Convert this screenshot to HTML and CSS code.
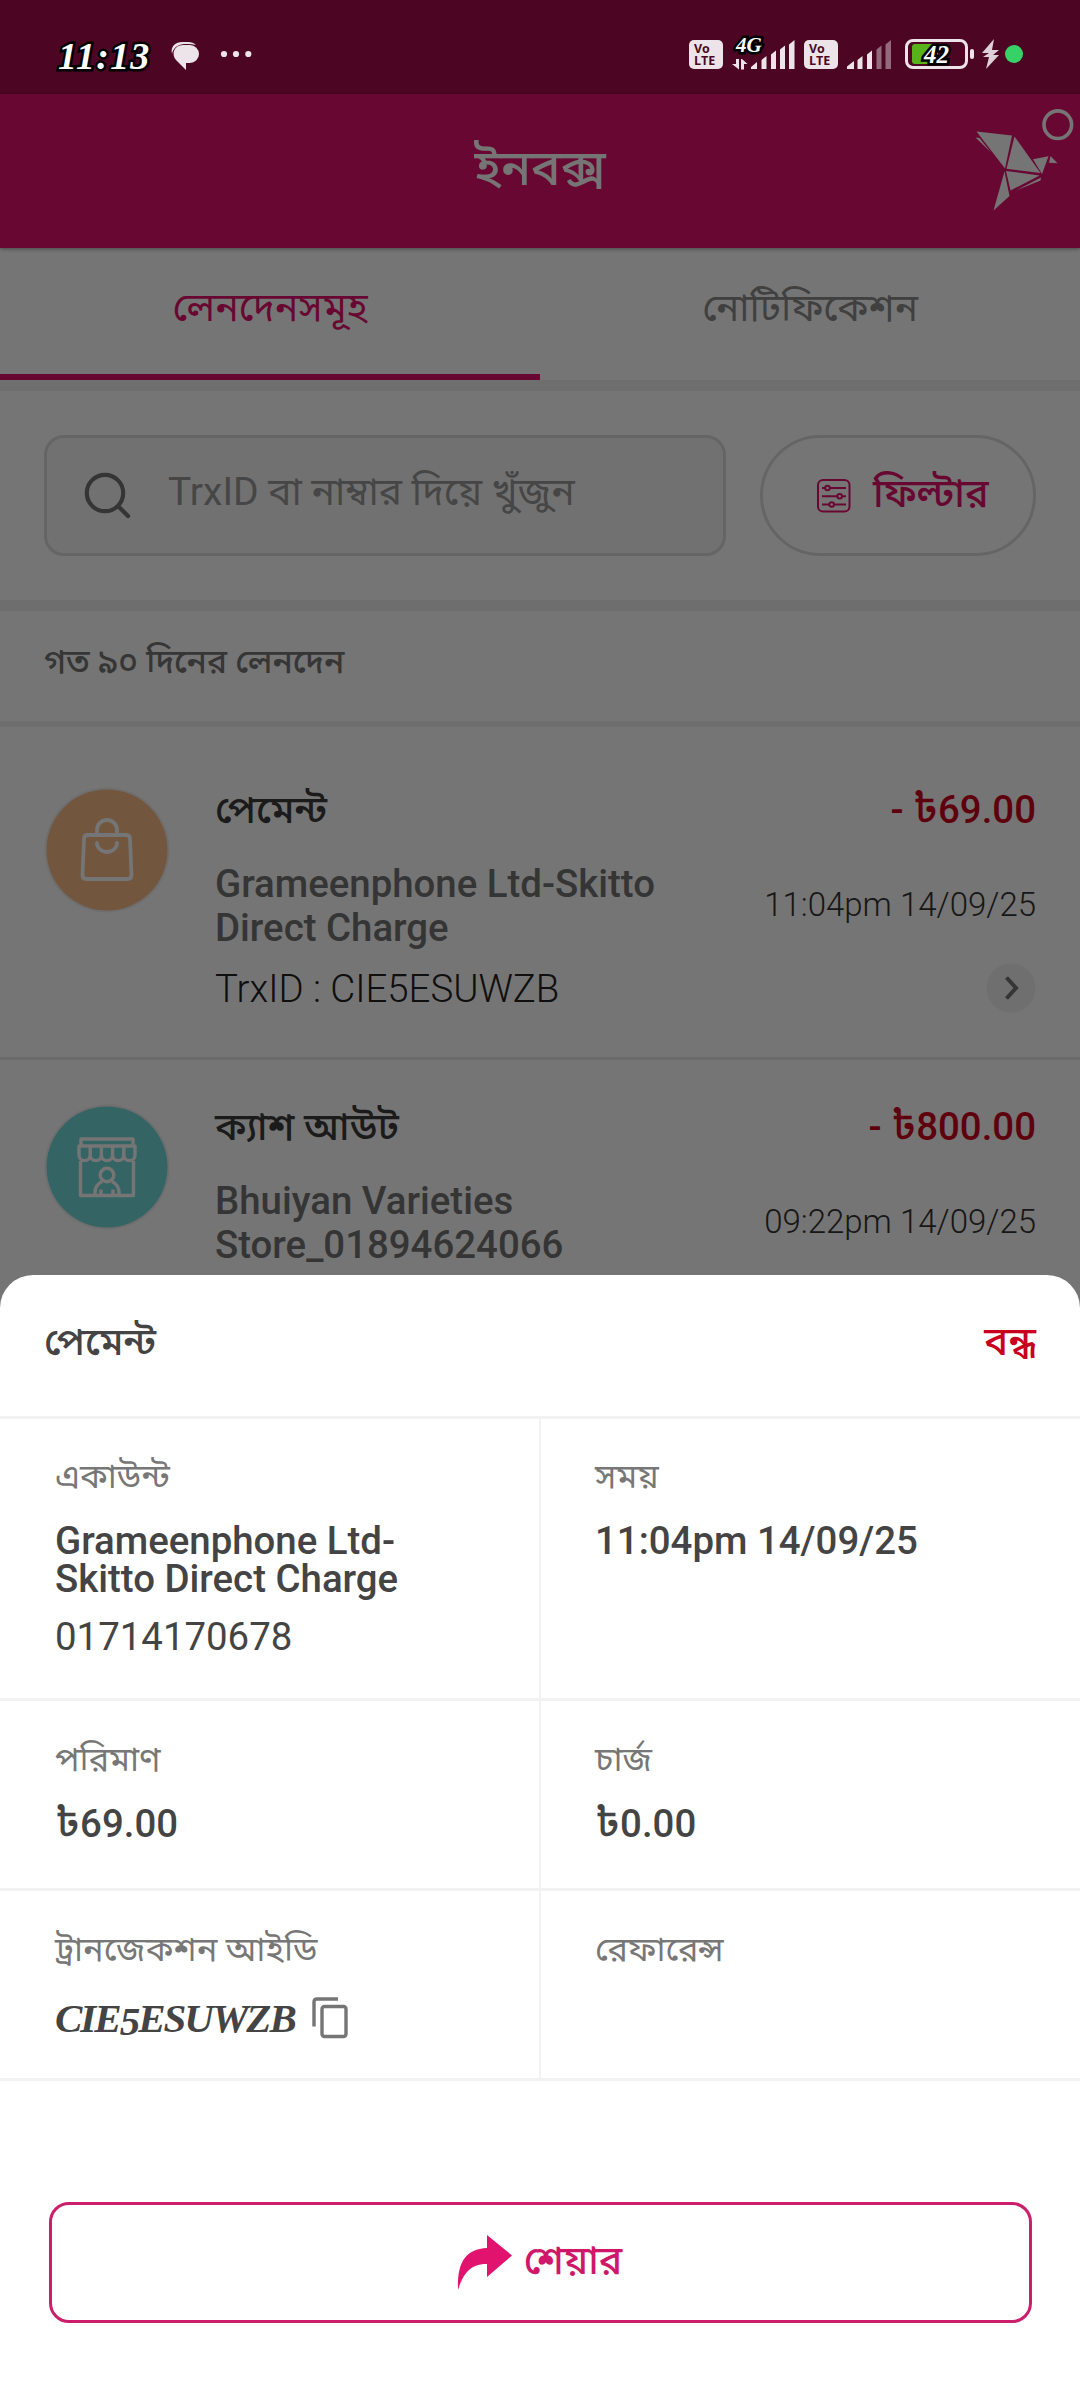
FILE: index.html
```html
<!DOCTYPE html>
<html lang="bn">
<head>
<meta charset="utf-8">
<title>ইনবক্স</title>
<link rel="stylesheet" href="styles.css">
</head>
<body>
<div class="phone">
  <main class="app">
    <div class="status-bg"></div>
    <header class="appbar">
      <h1 class="appbar-title">ইনবক্স</h1>
      <svg class="bird" width="120" height="120" viewBox="0 0 120 120">
        <g fill="#fff">
          <path d="M16.500 31.500 52 35.500 45 68.500Z"/>
          <path d="M54.500 36.500 80.500 73 46.500 68.800Z"/>
          <path d="M15.500 37.500 19.500 38 31 52.500Z"/>
          <path d="M46 71 79.500 75.500 50.500 90.500Z"/>
          <path d="M44.500 71.500 49.500 96 33.500 110.500Z"/>
          <path d="M73 59.300 88.500 56.300 82 74Z"/>
          <path d="M90.500 56 97.500 63.300 89 62.800Z"/>
          <path d="M56 90.500 81 77.500 80.500 80.500Z"/>
        </g>
        <circle cx="97.800" cy="24.700" r="13.800" fill="none" stroke="#fff" stroke-width="3.600"/>
      </svg>
    </header>
    <nav class="tabs">
      <div class="tab tab-active">লেনদেনসমূহ</div>
      <div class="tab">নোটিফিকেশন</div>
    </nav>
    <section class="search-row">
      <div class="search">
        <svg width="50" height="50" viewBox="0 0 50 50" fill="none" stroke="#747474" stroke-width="4.200" stroke-linecap="round"><circle cx="22" cy="22" r="18.200"/><path d="M35.500 35.500 45 45"/></svg>
        <span>TrxID বা নাম্বার দিয়ে খুঁজুন</span>
      </div>
      <div class="filter">
        <svg width="34" height="34" viewBox="0 0 34 34" fill="none" stroke="#e2136e" stroke-width="2"><rect x="1" y="1" width="31.500" height="31.500" rx="5"/><path d="M5 9h3M13 9h16M5 17.300h15M25.500 17.300h3.500M5 25.500h7M17.500 25.500h11.500"/><circle cx="10.500" cy="9" r="2.300"/><circle cx="22.700" cy="17.300" r="2.300"/><circle cx="14.700" cy="25.500" r="2.300"/></svg>
        <span>ফিল্টার</span>
      </div>
    </section>
    <h2 class="list-title">গত ৯০ দিনের লেনদেন</h2>
    <article class="txn">
      <svg class="txn-icon" width="126" height="126" viewBox="0 0 126 126">
        <circle cx="63" cy="63" r="62.500" fill="#f0f0f0"/><circle cx="63" cy="63" r="60.500" fill="#f8bb87"/>
        <g fill="none" stroke="#fff" stroke-width="3.800" stroke-linecap="round"><path d="M44 48h38q4 0 4 4l1.500 36q0 4-4 4H42.500q-4 0-4-4L40 52q0-4 4-4ZM53 46v-3a10 10 0 0 1 20 0v3M53 56a10 9 0 0 0 20 0"/></g>
      </svg>
      <div class="txn-main">
        <h3>পেমেন্ট</h3>
        <p class="txn-name">Grameenphone Ltd-Skitto Direct Charge</p>
        <p class="txn-id">TrxID : CIE5ESUWZB</p>
      </div>
      <div class="txn-side">
        <p class="txn-amount">- <span class="taka">৳</span>69.00</p>
        <p class="txn-time">11:04pm 14/09/25</p>
        <svg width="50" height="50" viewBox="0 0 50 50"><circle cx="25" cy="25" r="24.500" fill="#f2f2f2"/><path d="M20.500 14.500 30 25l-9.500 10.500" fill="none" stroke="#747474" stroke-width="4"/></svg>
      </div>
    </article>
    <article class="txn txn-next">
      <svg class="txn-icon" width="126" height="126" viewBox="0 0 126 126">
        <circle cx="63" cy="63" r="62.500" fill="#f0f0f0"/><circle cx="63" cy="63" r="60.500" fill="#75d9d9"/>
        <g fill="none" stroke="#fff" stroke-width="3.400" stroke-linejoin="round"><path d="M37 35h52v7H37ZM35 42h56v9a5.600 5.600 0 0 1-11.200 0 5.600 5.600 0 0 1-11.200 0 5.600 5.600 0 0 1-11.200 0 5.600 5.600 0 0 1-11.200 0 5.600 5.600 0 0 1-11.200 0ZM46.200 42v9M57.400 42v9M68.600 42v9M79.800 42v9M36.500 57v34.500h53V57M51 91.500v-3c0-7 5-10 7-11M75 91.500v-3c0-7-5-10-7-11M57 85.500v6M69 85.500v6"/><circle cx="63" cy="71" r="6.800"/></g>
      </svg>
      <div class="txn-main">
        <h3>ক্যাশ আউট</h3>
        <p class="txn-name">Bhuiyan Varieties Store_01894624066</p>
      </div>
      <div class="txn-side">
        <p class="txn-amount">- <span class="taka">৳</span>800.00</p>
        <p class="txn-time">09:22pm 14/09/25</p>
      </div>
    </article>
  </main>
  <div class="scrim"></div>

  <div class="status">
    <span class="clock outlined">11:13</span>
    <svg class="status-chat" width="30" height="30" viewBox="0 0 30 30"><path d="M1 13C-1 5 5 1 11 1h6q5 0 8 3-4-1-8-1h-4C5 4 2 8 1 13Z" fill="#ece4e8"/><path d="M12 4h7a9 9 0 0 1 0 18h-4v7L5 19C0 13 3 4 12 4Z" fill="#ece4e8"/></svg>
    <svg class="status-dots" width="34" height="8" viewBox="0 0 34 8" fill="#ece4e8"><circle cx="4" cy="4" r="3.100"/><circle cx="16" cy="4" r="3.100"/><circle cx="28.300" cy="4" r="3.100"/></svg>
    <div class="volte"><span>Vo</span><span>LTE</span></div>
    <div class="net">
      <span class="net-type outlined">4G</span>
      <svg width="64" height="30" viewBox="0 0 64 30" fill="#ece4e8"><path d="M4 19h3v10.500L0 24h4ZM10 19l5.500 5H12v5.500H9V19ZM19 29v-2l6-5v7ZM29.500 29V20l5-4v13ZM39 29V14.500l5-4V29ZM48 29V9.500l5-4V29ZM57 29V4.500L62.500 0v29Z"/></svg>
    </div>
    <div class="volte volte-2"><span>Vo</span><span>LTE</span></div>
    <svg class="signal" width="46" height="30" viewBox="0 0 46 30" fill="#ece4e8"><path d="M0 29v-2.500l7-5.500v8ZM10.500 29V20l5-4v13ZM20 29V14.500l5-4V29Z"/><path opacity=".45" d="M29.500 29V9.500l5-4V29ZM38.500 29V4.500L44 0v29Z"/></svg>
    <div class="battery"><i></i><span class="outlined">42</span></div>
    <svg class="bolt" width="28" height="32" viewBox="0 0 28 32"><path d="M13 1 1 15h7L2 19h6l-3 12L18 17h-6l6-5h-7Z" fill="#ded0d7"/></svg>
    <i class="live-dot"></i>
  </div>

  <section class="sheet">
    <header class="sheet-head"><h2>পেমেন্ট</h2><span class="close">বন্ধ</span></header>
    <div class="details">
      <div class="cell cell-tall"><p class="label">একাউন্ট</p><p class="value">Grameenphone Ltd-<br>Skitto Direct Charge</p><p class="number">01714170678</p></div>
      <div class="cell cell-tall"><p class="label">সময়</p><p class="value">11:04pm 14/09/25</p></div>
      <div class="cell"><p class="label">পরিমাণ</p><p class="value"><span class="taka">৳</span>69.00</p></div>
      <div class="cell"><p class="label">চার্জ</p><p class="value"><span class="taka">৳</span>0.00</p></div>
      <div class="cell"><p class="label">ট্রানজেকশন আইডি</p>
        <div class="trx"><span>CIE</span><span class="old">5</span><span>ESUWZB</span>
          <svg width="36" height="42" viewBox="0 0 36 42" fill="none" stroke="#757575" stroke-width="3.400"><path d="M2 29.500V5q0-3 3-3h21"/><rect x="10" y="9.500" width="24" height="30" rx="2.500"/></svg>
        </div>
      </div>
      <div class="cell"><p class="label">রেফারেন্স</p></div>
    </div>
    <div class="share">
      <svg width="54" height="55" viewBox="0 0 54 55"><path d="M29 0 54 20.500 29 42V29C14 29 6 36 0 55 -1 28 7 14 29 13Z" fill="#e2136e"/></svg>
      <span>শেয়ার</span>
    </div>
  </section>
</div>
</body>
</html>
```
FILE: styles.css
```css
* { box-sizing: border-box; margin: 0; padding: 0; }
body { width: 1080px; height: 2400px; overflow: hidden; background: #fff; }
svg { display: block; flex: none; overflow: visible; }
h1, h2, h3 { font-weight: 500; }
.phone {
  position: relative; width: 1080px; height: 2400px; overflow: hidden;
  font-family: Roboto, "Noto Sans Bengali", "Noto Sans", sans-serif;
  font-size: 38.4px; line-height: 40px; color: #444;
}
.scrim { position: absolute; inset: 0; background: rgba(0, 0, 0, .54); }
.taka { font-size: 42px; line-height: 0; }

.status-bg { height: 94px; background: #a70f4c; }
.appbar {
  position: relative; height: 154px; background: #e2136e; color: #fff;
  display: flex; justify-content: center; padding-top: 54px;
  box-shadow: 0 1px 4px rgba(0, 0, 0, .4);
}
.appbar-title { font-size: 49.4px; line-height: 40px; }
.bird { position: absolute; right: 0; top: 6px; }

.tabs { display: flex; height: 143px; border-bottom: 11px solid #efefef; color: #8c8c8c; }
.tab { flex: 1; text-align: center; padding-top: 40px; font-size: 38.6px; }
.tab-active { color: #e2136e; border-bottom: 6px solid #e2136e; font-size: 39.2px; }

.search-row { display: flex; gap: 34px; height: 220px; padding: 44px 44px 0; border-bottom: 11px solid #efefef; }
.search {
  width: 682px; height: 121px; border: 3px solid #dcdcdc; border-radius: 20px; background: #f6f6f6;
  display: flex; align-items: center; gap: 35px; padding-left: 36px; color: #999; font-size: 39px;
}
.search span { padding-bottom: 8px; white-space: nowrap; }
.filter {
  width: 276px; height: 121px; border: 3px solid #dcdcdc; border-radius: 61px; color: #e2136e;
  display: flex; align-items: center; padding-left: 54px; gap: 22px; font-weight: 500; font-size: 39.5px;
}
.filter span { padding-bottom: 4px; white-space: nowrap; }

.list-title { height: 116px; padding: 31px 44px 0; font-size: 33.5px; line-height: 40px; color: #777; border-bottom: 6px solid #efefef; }

.txn { display: flex; height: 333px; padding: 0 44px; border-bottom: 3px solid #e9e9e9; }
.txn-icon { margin: 60px 45px 0 0; }
.txn-main { width: 480px; padding-top: 63px; }
.txn-main h3 { font-size: 38.9px; line-height: 40px; color: #3c3c3c; }
.txn-name { margin-top: 32px; line-height: 44px; font-weight: 500; color: #747474; }
.txn-id { margin-top: 19px; font-weight: 300; color: #222; }
.txn-side { flex: 1; display: flex; flex-direction: column; align-items: flex-end; padding-top: 63px; white-space: nowrap; }
.txn-amount { font-weight: 500; color: #cf0020; }
.txn-time { margin-top: 55px; font-size: 33px; font-weight: 300; color: #333; }
.txn-side svg { margin-top: 38px; }
.txn-next { height: 317px; border: 0; }
.txn-next .txn-icon { margin-top: 44px; }
.txn-next .txn-main, .txn-next .txn-side { padding-top: 47px; }

.status { position: absolute; inset: 0 0 auto 0; height: 94px; color: #ece4e8; }
.status > * { position: absolute; }
.outlined {
  font-family: "Liberation Serif", serif; font-style: italic; font-weight: 700; color: #fff;
  -webkit-text-stroke: 5px #000; paint-order: stroke fill;
}
.clock { left: 58px; top: 36px; font-size: 38px; letter-spacing: 1.2px; }
.status-chat { left: 171px; top: 41px; }
.status-dots { left: 220px; top: 50px; }
.volte {
  left: 689px; top: 40px; width: 34px; height: 29px; border-radius: 5px; background: #ece4e8; color: #4d0723;
  font: 700 12.5px/12px "Open Sans", sans-serif; padding: 3px 0 0 5px; display: flex; flex-direction: column;
}
.volte-2 { left: 804px; }
.net { left: 732px; top: 40px; }
.net-type { position: absolute; left: 4px; top: -7px; font-size: 21px; line-height: 24px; }
.signal { left: 847px; top: 40px; }
.battery { left: 905px; top: 39px; width: 63px; height: 30px; border: 3px solid #ece4e8; border-radius: 8px; }
.battery i { position: absolute; left: 4px; top: 2px; width: 26px; height: 20px; border-radius: 3px 0 0 3px; background: #58b31b; }
.battery::after { content: ""; position: absolute; left: 62px; top: 7px; width: 4px; height: 10px; border-radius: 2px; background: #ece4e8; }
.battery span { position: absolute; left: 16px; top: 0; font-size: 25px; line-height: 25px; }
.bolt { left: 981px; top: 38px; }
.live-dot { left: 1005px; top: 45px; width: 18px; height: 18px; border-radius: 50%; background: #36d267; }

.sheet { position: absolute; left: 0; right: 0; bottom: 0; height: 1125px; background: #fff; border-radius: 33px 33px 0 0; }
.sheet-head { display: flex; justify-content: space-between; height: 144px; padding: 47px 44px 0; border-bottom: 3px solid #f2f2f2; }
.sheet-head h2 { font-size: 38.9px; line-height: 40px; }
.close { color: #c8001e; font-size: 40px; line-height: 40px; font-weight: 500; }
.details { display: grid; grid-template-columns: 541px 539px; grid-template-rows: 282px 190px 190px; }
.cell { padding: 38px 0 0 54px; border-bottom: 3px solid #f2f2f2; }
.cell:nth-child(odd) { border-right: 2px solid #f2f2f2; padding-left: 55px; }
.cell-tall { padding-top: 37px; }
.label { font-size: 34.3px; line-height: 40px; color: #777; }
.value { margin-top: 26px; line-height: 38px; font-weight: 500; }
.number { margin-top: 20px; line-height: 38px; }
.trx { display: flex; align-items: flex-start; font: italic 700 41px/40px "Liberation Serif", serif; letter-spacing: -2px; margin-top: 29px; }
.old { transform: translateY(3px); }
.trx svg { margin: -1px 0 0 17px; }
.share {
  display: flex; align-items: center; justify-content: center; gap: 12px; width: 983px; height: 121px;
  margin: 121px auto 0; border: 3px solid #cb1f6b; border-radius: 20px; color: #d0186a; font-size: 39.2px; font-weight: 500;
}
.share span { padding-bottom: 4px; }
```
